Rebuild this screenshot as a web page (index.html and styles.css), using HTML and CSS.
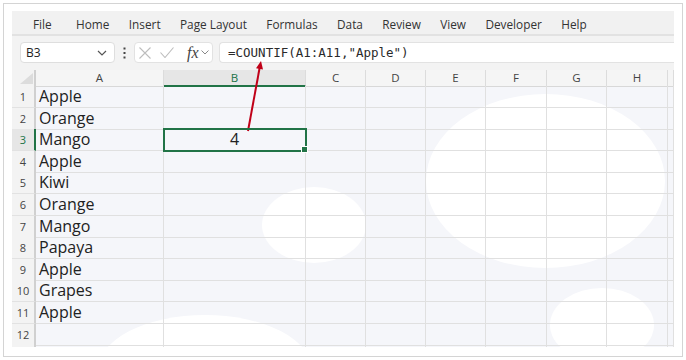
FILE: index.html
```html
<!DOCTYPE html>
<html>
<head>
    <title>COUNTIF example</title>
    <link rel="stylesheet" href="styles.css">
</head>
<body>
    <div class="frame">
        <div class="app">
            <div class="ribbon">
                <span class="tab">File</span>
                <span class="tab">Home</span>
                <span class="tab">Insert</span>
                <span class="tab">Page Layout</span>
                <span class="tab">Formulas</span>
                <span class="tab">Data</span>
                <span class="tab">Review</span>
                <span class="tab">View</span>
                <span class="tab">Developer</span>
                <span class="tab">Help</span>
            </div>

            <div class="formula-bar">
                <div class="name-box">
                    <span>B3</span>
                    <svg width="10" height="6" viewBox="0 0 10 6"><path d="M1 1l4 4 4-4" fill="none" stroke="#555" stroke-width="1.2"/></svg>
                </div>
                <svg class="dots" width="3" height="12" viewBox="0 0 3 12"><rect x="0.5" y="0.5" width="2" height="2" fill="#444"/><rect x="0.5" y="5" width="2" height="2" fill="#444"/><rect x="0.5" y="9.5" width="2" height="2" fill="#444"/></svg>
                <div class="fx-box">
                    <svg class="cancel" width="12" height="12" viewBox="0 0 12 12"><path d="M0.5 0.5l11 11M11.5 0.5l-11 11" stroke="#bdbdbd" stroke-width="1.1"/></svg>
                    <svg class="enter" width="14" height="11" viewBox="0 0 14 11"><path d="M0.5 5.5l4.5 5 8.5-10" fill="none" stroke="#bdbdbd" stroke-width="1.1"/></svg>
                    <span class="fx">fx</span>
                    <svg width="8" height="5" viewBox="0 0 8 5"><path d="M0.5 0.5l3.5 3.5 3.5-3.5" fill="none" stroke="#888" stroke-width="1"/></svg>
                </div>
                <div class="formula">=COUNTIF(A1:A11,"Apple")</div>
            </div>

            <div class="sheet">
                <div class="blob blob-1"></div>
                <div class="blob blob-2"></div>
                <div class="blob blob-3"></div>
                <div class="blob blob-4"></div>

                <div class="row head">
                    <div class="corner"><svg width="13" height="11" viewBox="0 0 13 11"><path d="M13 0V11H0z" fill="#dcdcdc"/></svg></div>
                    <div class="ch">A</div><div class="ch active">B</div><div class="ch">C</div><div class="ch">D</div><div class="ch">E</div><div class="ch">F</div><div class="ch">G</div><div class="ch">H</div><div class="ch"></div>
                </div>
                <div class="row"><div class="rh">1</div><div class="c">Apple</div><div class="c"></div><div class="c"></div><div class="c"></div><div class="c"></div><div class="c"></div><div class="c"></div><div class="c"></div><div class="c"></div></div>
                <div class="row"><div class="rh">2</div><div class="c">Orange</div><div class="c"></div><div class="c"></div><div class="c"></div><div class="c"></div><div class="c"></div><div class="c"></div><div class="c"></div><div class="c"></div></div>
                <div class="row"><div class="rh active">3</div><div class="c">Mango</div><div class="c sel">4</div><div class="c"></div><div class="c"></div><div class="c"></div><div class="c"></div><div class="c"></div><div class="c"></div><div class="c"></div></div>
                <div class="row"><div class="rh">4</div><div class="c">Apple</div><div class="c"></div><div class="c"></div><div class="c"></div><div class="c"></div><div class="c"></div><div class="c"></div><div class="c"></div><div class="c"></div></div>
                <div class="row"><div class="rh">5</div><div class="c">Kiwi</div><div class="c"></div><div class="c"></div><div class="c"></div><div class="c"></div><div class="c"></div><div class="c"></div><div class="c"></div><div class="c"></div></div>
                <div class="row"><div class="rh">6</div><div class="c">Orange</div><div class="c"></div><div class="c"></div><div class="c"></div><div class="c"></div><div class="c"></div><div class="c"></div><div class="c"></div><div class="c"></div></div>
                <div class="row"><div class="rh">7</div><div class="c">Mango</div><div class="c"></div><div class="c"></div><div class="c"></div><div class="c"></div><div class="c"></div><div class="c"></div><div class="c"></div><div class="c"></div></div>
                <div class="row"><div class="rh">8</div><div class="c">Papaya</div><div class="c"></div><div class="c"></div><div class="c"></div><div class="c"></div><div class="c"></div><div class="c"></div><div class="c"></div><div class="c"></div></div>
                <div class="row"><div class="rh">9</div><div class="c">Apple</div><div class="c"></div><div class="c"></div><div class="c"></div><div class="c"></div><div class="c"></div><div class="c"></div><div class="c"></div><div class="c"></div></div>
                <div class="row"><div class="rh">10</div><div class="c">Grapes</div><div class="c"></div><div class="c"></div><div class="c"></div><div class="c"></div><div class="c"></div><div class="c"></div><div class="c"></div><div class="c"></div></div>
                <div class="row"><div class="rh">11</div><div class="c">Apple</div><div class="c"></div><div class="c"></div><div class="c"></div><div class="c"></div><div class="c"></div><div class="c"></div><div class="c"></div><div class="c"></div></div>
                <div class="row"><div class="rh">12</div><div class="c"></div><div class="c"></div><div class="c"></div><div class="c"></div><div class="c"></div><div class="c"></div><div class="c"></div><div class="c"></div><div class="c"></div></div>
                <div class="row"><div class="rh"></div><div class="c"></div><div class="c"></div><div class="c"></div><div class="c"></div><div class="c"></div><div class="c"></div><div class="c"></div><div class="c"></div><div class="c"></div></div>
            </div>
        </div>
    </div>

    <!-- callout arrow from the result cell up to the formula -->
    <svg class="arrow" width="686" height="360" viewBox="0 0 686 360">
        <path d="M248 131L259.6 68" stroke="#c00018" stroke-width="2" fill="none"/>
        <path d="M261 61L263 69.5L256 68.3z" fill="#c00018"/>
    </svg>
</body>
</html>
```

FILE: styles.css
```css
* {
    margin: 0;
    padding: 0;
    box-sizing: border-box;
}
body {
    position: relative;
    width: 686px;
    height: 360px;
    background: #fff;
    font-family: "Open Sans", "Noto Sans", sans-serif;
    color: #222;
}
.frame {
    margin: 3px 0 0 3px;
    width: 680px;
    height: 354px;
    border: 1px solid #d4d4d4;
    padding: 7px 8px 8px 8px;
}
.app {
    height: 336px;
    display: flex;
    flex-direction: column;
}

/* ribbon tabs */
.ribbon {
    height: 25px;
    background: #f1f1f1;
    border-bottom: 2px solid #e2e2e2;
    display: flex;
    align-items: center;
    gap: 19.4px;
    padding: 2px 0 0 21px;
    font-size: 11.8px;
    color: #333;
}
.tab:first-child {
    margin-right: 5px;
}

/* name box + formula input */
.formula-bar {
    height: 34px;
    background: #f3f3f3;
    display: flex;
    align-items: flex-start;
    padding: 6px 0 0 8px;
}
.name-box {
    width: 95px;
    height: 21px;
    background: #fff;
    border: 1px solid #dedede;
    border-radius: 4px;
    display: flex;
    align-items: center;
    justify-content: space-between;
    padding: 0 7px 0 5px;
    font-size: 12px;
    color: #222;
}
.dots {
    margin: 5px 8px 0 8px;
}
.fx-box {
    width: 79px;
    height: 21px;
    background: #fff;
    border: 1px solid #e2e2e2;
    border-radius: 4px;
    display: flex;
    align-items: center;
    padding: 0 0 0 4px;
}
.fx-box .enter {
    margin-left: 9px;
}
.fx-box .fx {
    font-family: "Liberation Serif", serif;
    font-style: italic;
    font-size: 16px;
    color: #444;
    margin: 0 2px 0 13px;
}
.formula {
    flex: 1;
    height: 21px;
    margin-left: 6px;
    background: #fff;
    border: 1px solid #e2e2e2;
    border-right: none;
    border-radius: 4px 0 0 4px;
    padding-left: 8px;
    font-family: "DejaVu Sans Mono", monospace;
    font-size: 12.5px;
    line-height: 19px;
    color: #2a2a2a;
}

/* worksheet */
.sheet {
    position: relative;
    flex: 1;
    overflow: hidden;
    background: #f5f6fa;
}
.blob {
    position: absolute;
    background: #fff;
    border-radius: 50%;
}
.blob-1 { left: 414px; top: 24px; width: 239px; height: 174px; }
.blob-2 { left: 250px; top: 117px; width: 104px; height: 76px; }
.blob-3 { left: 86px; top: 245px; width: 214px; height: 110px; }
.blob-4 { left: 538px; top: 218px; width: 104px; height: 74px; }

.row {
    position: relative;
    display: grid;
    grid-template-columns: 24px 128px 142px 60px 60px 60px 61px 60px 61px 1fr;
    height: 21.6px;
}
.row.head {
    height: 16px;
}
.corner {
    background: #f3f3f3;
    border-right: 2px solid #d0d0d0;
    border-bottom: 1px solid #d8d8d8;
    display: flex;
    align-items: flex-end;
    justify-content: flex-end;
    padding: 0 1px 2px 0;
}
.ch {
    background: #f5f5f5;
    border-right: 1px solid #dcdcdc;
    border-bottom: 1px solid #d8d8d8;
    text-align: center;
    font-size: 11.5px;
    line-height: 15px;
    color: #444;
}
.ch.active {
    background: #e6e6e6;
    border-bottom: 2px solid #217346;
    color: #217346;
}
.rh {
    background: #f3f3f3;
    border-right: 2px solid #d0d0d0;
    border-bottom: 1px solid #e2e2e2;
    text-align: center;
    font-size: 11px;
    line-height: 21px;
    color: #444;
}
.rh.active {
    background: #e6e6e6;
    border-right: 2px solid #217346;
    color: #217346;
}
.c {
    border-right: 1px solid #e0e0e0;
    border-bottom: 1px solid #e0e0e0;
    font-size: 16px;
    line-height: 20px;
    padding-left: 3px;
    color: #222;
    white-space: nowrap;
}
.c.sel {
    outline: 2px solid #217346;
    outline-offset: -1px;
    z-index: 2;
    position: relative;
    text-align: center;
    padding-left: 0;
}
.c.sel::after {
    content: "";
    position: absolute;
    right: -3px;
    bottom: -3px;
    width: 5px;
    height: 5px;
    background: #217346;
    border: 1px solid #fff;
}

.arrow {
    position: absolute;
    left: 0;
    top: 0;
    pointer-events: none;
}
```
